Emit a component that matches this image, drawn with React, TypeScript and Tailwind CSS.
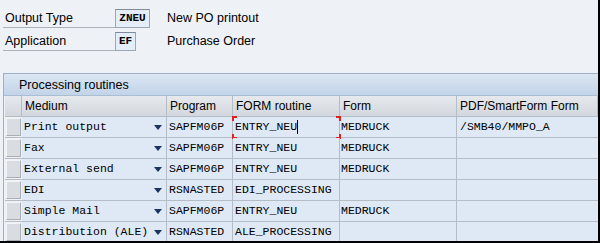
import { Fragment } from 'react';

const rows = [
  { medium: 'Print output', program: 'SAPFM06P', routine: 'ENTRY_NEU', form: 'MEDRUCK', pdf: '/SMB40/MMPO_A' },
  { medium: 'Fax', program: 'SAPFM06P', routine: 'ENTRY_NEU', form: 'MEDRUCK', pdf: '' },
  { medium: 'External send', program: 'SAPFM06P', routine: 'ENTRY_NEU', form: 'MEDRUCK', pdf: '' },
  { medium: 'EDI', program: 'RSNASTED', routine: 'EDI_PROCESSING', form: '', pdf: '' },
  { medium: 'Simple Mail', program: 'SAPFM06P', routine: 'ENTRY_NEU', form: 'MEDRUCK', pdf: '' },
  { medium: 'Distribution (ALE)', program: 'RSNASTED', routine: 'ALE_PROCESSING', form: '', pdf: '' },
];

const sans = "font-['Liberation_Sans',Arial,sans-serif]";
const mono = "font-['Liberation_Mono','DejaVu_Sans_Mono',monospace]";

function Field({ label, value, text, boxW, gap }: { label: string; value: string; text: string; boxW: string; gap: string }) {
  return (
    <div className="flex items-end h-[19px] mt-[4px]">
      <div className={`w-[112px] h-[18px] border-b border-[#a9b1bb] pl-[2px] text-[12.5px] leading-[16px] text-black ${sans}`}>{label}</div>
      <div className={`${boxW} h-[19px] bg-[#e4edf8] border border-[#9aa7b7] border-t-[#7f8b9a] flex items-center justify-center text-[11px] font-bold text-black ${mono}`}>
        {value}
      </div>
      <div className={`${gap} h-[18px] text-[12.5px] leading-[16px] text-black ${sans}`}>{text}</div>
    </div>
  );
}

function Arrow() {
  return (
    <svg width="8" height="5" viewBox="0 0 8 5" className="shrink-0">
      <path d="M0 0H8L4 5Z" fill="#1c3560" />
    </svg>
  );
}

export default function App() {
  return (
    <div className="w-[600px] h-[243px] bg-[#eef1f6] border-r-2 border-b-2 border-black overflow-hidden">
      <div className="pt-[5px] pl-[3px]">
        <Field label="Output Type" value="ZNEU" text="New PO printout" boxW="w-[35px]" gap="ml-[17px]" />
        <Field label="Application" value="EF" text="Purchase Order" boxW="w-[21px]" gap="ml-[31px]" />
      </div>

      <div className="mt-[22px] ml-[3px] border-l border-t border-[#9cb0c8] h-[200px]">
        <div className={`h-[22px] border-b border-[#a9bdd3] bg-gradient-to-b from-[#dbe6f2] to-[#c2d4e8] pl-[15px] text-[12.5px] leading-[22px] text-black ${sans}`}>
          Processing routines
        </div>
        <div className="grid grid-cols-[17px_145px_66px_107px_117px_1fr] pl-[1px]">
          <div className="h-[21px] bg-gradient-to-b from-[#e6e9ed] to-[#d3d8de] border-r border-b border-[#b4bcc6]" />
          {['Medium', 'Program', 'FORM routine', 'Form', 'PDF/SmartForm Form'].map((h) => (
            <div key={h} className={`h-[21px] bg-gradient-to-b from-[#e6e9ed] to-[#d3d8de] border-r border-b border-[#b4bcc6] pl-[3px] text-[12px] leading-[20px] text-black ${sans}`}>
              {h}
            </div>
          ))}
          {rows.map((r, i) => (
            <Fragment key={r.medium}>
              <div className="h-[21px] border-b border-[#b4bcc6] bg-[#eef1f6] p-[1px]">
                <div className="h-full bg-[#d9dce0] border border-t-[#f3f4f6] border-l-[#f3f4f6] border-r-[#a9afb7] border-b-[#a9afb7]" />
              </div>
              <div className={`h-[21px] bg-[#dfe9f5] border-r border-b border-[#b4bcc6] pl-[2px] pr-[4px] flex items-center justify-between text-[11.5px] text-black ${mono}`}>
                <span>{r.medium}</span>
                <Arrow />
              </div>
              <div className={`h-[21px] bg-[#dfe9f5] border-r border-b border-[#b4bcc6] pl-[2px] flex items-center text-[11.5px] text-black ${mono}`}>
                {r.program}
              </div>
              <div className={`relative h-[21px] bg-[#dfe9f5] border-r border-b border-[#b4bcc6] pl-[2px] flex items-center text-[11.5px] text-black ${mono}`}>
                {r.routine}
                {i === 0 && (
                  <>
                    <span className="w-px h-[14px] bg-black" />
                    <span className="absolute left-[-1px] top-[-1px] w-[5px] h-[5px] border-l-2 border-t-2 border-[#e0201c]" />
                    <span className="absolute right-[-2px] top-[-1px] w-[5px] h-[5px] border-r-2 border-t-2 border-[#e0201c]" />
                    <span className="absolute left-[-1px] bottom-[-2px] w-[5px] h-[5px] border-l-2 border-b-2 border-[#e0201c]" />
                    <span className="absolute right-[-2px] bottom-[-2px] w-[5px] h-[5px] border-r-2 border-b-2 border-[#e0201c]" />
                  </>
                )}
              </div>
              <div className={`h-[21px] bg-[#dfe9f5] border-r border-b border-[#b4bcc6] pl-[1px] flex items-center text-[11.5px] text-black ${mono}`}>
                {r.form}
              </div>
              <div className={`h-[21px] bg-[#dfe9f5] border-b border-[#b4bcc6] pl-[3px] flex items-center text-[11.5px] text-black ${mono}`}>
                {r.pdf}
              </div>
            </Fragment>
          ))}
        </div>
      </div>
    </div>
  );
}
